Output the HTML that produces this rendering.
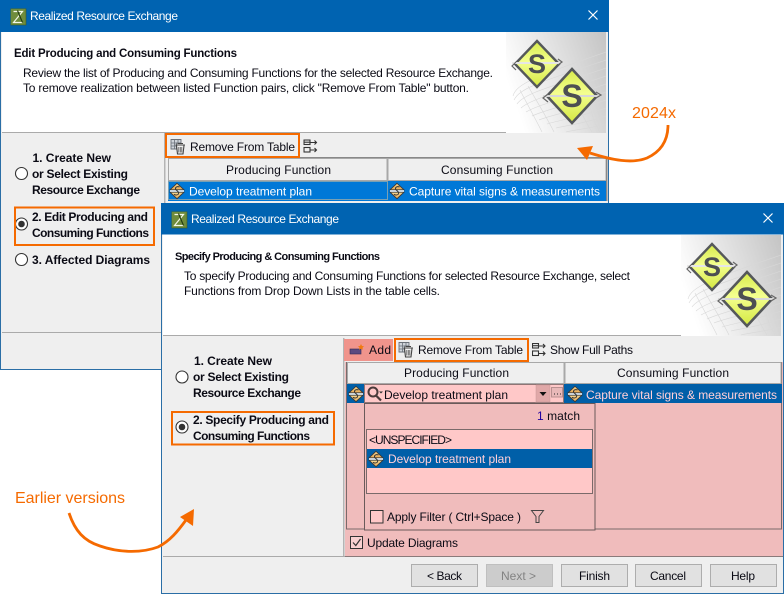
<!DOCTYPE html>
<html><head><meta charset="utf-8"><style>
html,body{margin:0;padding:0;background:#fff;width:784px;height:594px;overflow:hidden}
svg{display:block}
text{font-family:"Liberation Sans",sans-serif;font-size:12px;fill:#0a0a14;white-space:pre}
.b{font-weight:bold}
.h{font-weight:bold;font-size:11.5px}
.w{fill:#fff}
.o{font-size:16px;fill:#f56a00}
.or{fill:none;stroke:#f56a00;stroke-width:2}
.hd{fill:#efefef;stroke:#a8a8a8}
.btn{fill:#e1e1e1;stroke:#adadad}
</style></head><body>
<svg xmlns="http://www.w3.org/2000/svg" width="784" height="594" viewBox="0 0 784 594">
<defs>
<linearGradient id="bg" x1="0" y1="0.45" x2="1" y2="0.1"><stop offset="0" stop-color="#fff"/><stop offset="0.2" stop-color="#f4f4f4"/><stop offset="1" stop-color="#c6c6c6"/></linearGradient>
<linearGradient id="yl" x1="0" y1="0" x2="0" y2="1"><stop offset="0" stop-color="#d6ea48"/><stop offset="0.45" stop-color="#f4ff90"/><stop offset="1" stop-color="#d4e840"/></linearGradient>
<linearGradient id="or2" x1="0" y1="0" x2="0" y2="1"><stop offset="0" stop-color="#f8dc98"/><stop offset="1" stop-color="#e8a850"/></linearGradient>
<symbol id="banner" width="100" height="101" viewBox="0 0 100 101">
<rect width="100" height="101" fill="url(#bg)"/>
<g fill="none" stroke="#d8d8d8" stroke-width=".6">
<path d="M7 64C10 52 30 44 100 20"/><path d="M8 68C14 56 34 50 100 28"/><path d="M11 72C18 62 40 56 100 36"/><path d="M15 76C24 68 46 62 100 44"/><path d="M20 80C30 74 52 68 100 52"/><path d="M26 84C36 79 58 74 100 60"/><path d="M33 88C42 84 64 80 100 68"/><path d="M41 92C50 89 70 86 100 76"/><path d="M50 96C58 94 76 92 100 84"/><path d="M60 100C66 98 82 97 100 92"/>
<path d="M14 58C20 70 28 84 36 100"/><path d="M22 54C30 68 40 84 48 100"/><path d="M74 78C78 86 82 94 86 100"/><path d="M84 74C86 84 90 94 94 100"/>
</g>
<path d="M31 9L53 32L31 55L9 32Z" fill="url(#yl)" stroke="#55585a" stroke-width="2.4"/>
<path d="M6 31L56 31" stroke="#e6e6e6" stroke-width="2"/><path d="M52 27L56 30L52 33M10 30L6 34L10 38" fill="none" stroke="#666" stroke-width="1.2"/>
<text x="31" y="41" text-anchor="middle" style="font-size:27px;font-weight:bold;fill:#4d4f52">S</text>
<path d="M66 37L91 64L66 91L41 64Z" fill="url(#yl)" stroke="#55585a" stroke-width="2.6"/>
<path d="M37 64L95 64" stroke="#d8d8d8" stroke-width="2"/><path d="M90 60L95 63L90 66M42 62L37 66L42 70" fill="none" stroke="#666" stroke-width="1.2"/>
<text x="66" y="75" text-anchor="middle" style="font-size:32px;font-weight:bold;fill:#4d4f52">S</text>
</symbol>
<symbol id="sig" width="16" height="17" viewBox="0 0 16 17">
<path d="M8 .8L15 7.300H1Z" fill="url(#or2)" stroke="#3a3a3a" stroke-width=".9"/>
<path d="M1 9.700H15L8 16.200Z" fill="url(#or2)" stroke="#3a3a3a" stroke-width=".9"/>
<path d="M1 8.500H15" stroke="#f4f4f4" stroke-width="1.600"/>
<path d="M10.500 4.500C8 3.400 5.500 5 7 7.200C8.400 8.800 11 10 9 12C7.600 12.800 6 12.400 5 11.800" fill="none" stroke="#333" stroke-width="1"/>
</symbol>
<symbol id="rm" width="16" height="16" viewBox="0 0 16 16">
<path d="M.5 .5H10.5V4H6V10H.5Z" fill="#cfd4da" stroke="#6a7078" stroke-width=".9"/>
<path d="M4 .5V10M.5 4H6M.5 7H6M7.5 .5V4" stroke="#6a7078" stroke-width=".8" fill="none"/>
<path d="M5 6H14.500M7 4.500H12.500" stroke="#444" stroke-width="1.100"/>
<path d="M6 6.500L7 15H12.500L13.500 6.500" fill="#f0f0f0" stroke="#444" stroke-width="1.100"/>
<path d="M8.300 8V13.500M9.800 8V13.500M11.300 8V13.500" stroke="#555" stroke-width=".8"/>
</symbol>
<symbol id="paths" width="14" height="14" viewBox="0 0 14 14">
<g fill="none" stroke="#333" stroke-width="1.100"><rect x=".5" y=".5" width="6" height="4.500"/><rect x=".5" y="8" width="6" height="4.500"/><path d="M.5 2.700H6.500"/><path d="M7 3H13M11 1L13 3L11 5M7 10.500H13M11 8.500L13 10.500L11 12.500"/></g>
</symbol>
<symbol id="app" width="16" height="17" viewBox="0 0 16 17">
<rect width="15.500" height="16.500" fill="#6f8c3c" stroke="#3f5a20" stroke-width=".6"/>
<path d="M3 3H12L3 14H12" fill="none" stroke="#f4f8e8" stroke-width="1.200"/><path d="M7 2L12 14" stroke="#223a10" stroke-width="1.100"/>
</symbol>
</defs>

<!-- Window 1 -->
<rect x=".5" y=".5" width="608" height="369" fill="#efefef" stroke="#2a6ea6"/>
<rect x="0" y="0" width="609" height="32" fill="#0063b1"/>
<rect x="2" y="32" width="604" height="101" fill="#fff"/>
<rect x="2" y="132" width="504" height="1" fill="#aaa"/>
<use href="#banner" x="506" y="32"/>
<use href="#app" x="10.500" y="8.500"/>
<text x="30" y="20" class="w" textLength="148">Realized Resource Exchange</text>
<path d="M588.500 10.500L597.500 19.500M597.500 10.500L588.500 19.500" stroke="#fff" stroke-width="1.200"/>
<text x="14" y="57" class="h" textLength="223">Edit Producing and Consuming Functions</text>
<text x="23" y="77" textLength="470">Review the list of Producing and Consuming Functions for the selected Resource Exchange.</text>
<text x="23" y="92" textLength="446">To remove realization between listed Function pairs, click "Remove From Table" button.</text>
<rect x="164" y="133" width="1.500" height="70" fill="#b4b4b4"/>
<circle cx="21.500" cy="173.500" r="6" fill="#fff" stroke="#333" stroke-width="1.100"/>
<text x="32.500" y="162" class="b" textLength="78.500">1. Create New</text>
<text x="32" y="178" class="b" textLength="96">or Select Existing</text>
<text x="32" y="194" class="b" textLength="108">Resource Exchange</text>
<circle cx="21.500" cy="224" r="6" fill="#fff" stroke="#333" stroke-width="1.100"/><circle cx="21.500" cy="224" r="3.300" fill="#333"/>
<text x="32" y="221" class="b" textLength="116">2. Edit Producing and</text>
<text x="32" y="237" class="b" textLength="117">Consuming Functions</text>
<rect class="or" x="15" y="207.500" width="139" height="37.500"/>
<circle cx="21.500" cy="259.500" r="6" fill="#fff" stroke="#333" stroke-width="1.100"/>
<text x="32" y="264" class="b" textLength="118">3. Affected Diagrams</text>
<rect x="2" y="332" width="160" height="1" fill="#aaa"/>
<use href="#rm" x="170.500" y="139"/>
<text x="190" y="151" textLength="105">Remove From Table</text>
<rect class="or" x="166" y="134" width="133" height="23"/>
<use href="#paths" x="303.500" y="139.500"/>
<rect x="300" y="157" width="307" height="1" fill="#888"/>
<rect class="hd" x="168.500" y="158.500" width="218.500" height="22"/>
<rect class="hd" x="388" y="158.500" width="218" height="22"/>
<text x="226" y="174" textLength="105">Producing Function</text>
<text x="441" y="174" textLength="112">Consuming Function</text>
<rect x="168" y="181" width="439" height="20" fill="#0078d7"/>
<rect x="168.500" y="181.500" width="219" height="18" fill="none" stroke="#f0c890" stroke-dasharray="1 1"/>
<rect x="606" y="158" width="1.500" height="43" fill="#888"/>
<use href="#sig" x="169" y="182.500"/><use href="#sig" x="389" y="182.500"/>
<text x="189" y="195.500" class="w" textLength="123">Develop treatment plan</text>
<text x="409" y="195.500" class="w" textLength="191">Capture vital signs &amp; measurements</text>

<!-- Annotation 1 -->
<text x="632" y="118" class="o" textLength="44">2024x</text>

<!-- Window 2 -->
<rect x="161.500" y="203.500" width="622" height="390" fill="#efefef" stroke="#2a6ea6"/>
<rect x="161" y="203" width="623" height="31.500" fill="#0063b1"/>
<rect x="163" y="234.500" width="618" height="101" fill="#fff"/>
<rect x="163" y="335" width="518" height="1" fill="#aaa"/>
<use href="#banner" x="681" y="235"/>
<use href="#app" x="171.500" y="211.500"/>
<text x="191" y="223" class="w" textLength="148">Realized Resource Exchange</text>
<path d="M763.500 213.500L772.500 222.500M772.500 213.500L763.500 222.500" stroke="#fff" stroke-width="1.200"/>
<text x="175" y="260" class="h" textLength="205" style="font-size:11px">Specify Producing &amp; Consuming Functions</text>
<text x="184" y="280" textLength="446">To specify Producing and Consuming Functions for selected Resource Exchange, select</text>
<text x="184" y="295" textLength="256">Functions from Drop Down Lists in the table cells.</text>

<circle cx="182" cy="377" r="6" fill="#fff" stroke="#333" stroke-width="1.100"/>
<text x="194" y="365" class="b" textLength="78">1. Create New</text>
<text x="193" y="381" class="b" textLength="96">or Select Existing</text>
<text x="193" y="397" class="b" textLength="108">Resource Exchange</text>
<circle cx="182" cy="427" r="6" fill="#fff" stroke="#333" stroke-width="1.100"/><circle cx="182" cy="427" r="3.300" fill="#333"/>
<text x="193" y="424" class="b" textLength="136">2. Specify Producing and</text>
<text x="193" y="440" class="b" textLength="117">Consuming Functions</text>
<rect class="or" x="172" y="412" width="162" height="32.500"/>
<rect x="343" y="338" width="1.500" height="218" fill="#b4b4b4"/>
<rect x="163" y="556" width="620" height="1" fill="#aaa"/>

<!-- Pink panel -->
<rect x="345" y="362" width="438" height="194" fill="#f0bcbc"/>
<rect x="345" y="556" width="438" height="1" fill="#8a7a7a"/>
<rect x="344" y="339" width="49" height="22" fill="#f0948c"/>
<rect x="350" y="349" width="11" height="5" fill="#5a4a80" stroke="#332a55" stroke-width=".6"/>
<path d="M361 344l1 2 2 .3-1.500 1.500.4 2-1.900-1-1.900 1 .4-2-1.500-1.500 2-.3z" fill="#f07a10"/>
<text x="369" y="354" textLength="22">Add</text>
<use href="#rm" x="398.500" y="342"/>
<text x="418" y="354" textLength="105">Remove From Table</text>
<rect class="or" x="395" y="339" width="133" height="22"/>
<use href="#paths" x="532" y="343"/>
<text x="550" y="354" textLength="83">Show Full Paths</text>
<rect x="346.500" y="362.500" width="435" height="166.500" fill="none" stroke="#7a6a6a"/>
<rect class="hd" x="347.500" y="362.500" width="216.500" height="21"/>
<rect class="hd" x="565" y="362.500" width="216" height="21"/>
<text x="404" y="377" textLength="105">Producing Function</text>
<text x="617" y="377" textLength="112">Consuming Function</text>
<rect x="347" y="384" width="435" height="19" fill="#005fa8"/>
<use href="#sig" x="348" y="385.500"/><use href="#sig" x="567" y="385.500"/>
<rect x="364" y="384" width="200" height="19" fill="#ffc8c8"/>
<rect x="364.500" y="384.500" width="199" height="18" fill="none" stroke="#222" stroke-dasharray="1 1"/>
<circle cx="373" cy="392" r="4.500" fill="none" stroke="#4a3a3a" stroke-width="2"/><path d="M376 395.500L381 400.500" stroke="#4a3a3a" stroke-width="2.200"/><path d="M379 391.500h4l-2 2z" fill="#333"/>
<text x="384" y="399" textLength="124">Develop treatment plan</text>
<rect x="536" y="385" width="14" height="17" fill="#e0a8a8" stroke="#c89898" stroke-width=".5"/><path d="M539.500 392h7l-3.500 4z" fill="#111"/>
<rect x="551.500" y="387.500" width="11" height="9.500" fill="#e8b8b8" stroke="#b89090"/><path d="M554 394h1M557 394h1M560 394h1" stroke="#222"/>
<text x="586" y="399" textLength="191" style="fill:#ffd0d8">Capture vital signs &amp; measurements</text>
<!-- Drop panel -->
<rect x="364.500" y="403.500" width="230.500" height="126.500" fill="#f0bcbc" stroke="#6a5a5a"/>
<text x="537" y="420" textLength="43"><tspan fill="#2000a0">1</tspan> match</text>
<rect x="366.500" y="429.500" width="226" height="64" fill="#ffc8c8" stroke="#7a6a6a"/>
<text x="369" y="444" textLength="83">&lt;UNSPECIFIED&gt;</text>
<rect x="367" y="449" width="225" height="19" fill="#005fa8"/>
<use href="#sig" x="368" y="450.500"/>
<text x="388" y="463" textLength="123" style="fill:#ffd0d8">Develop treatment plan</text>
<rect x="370.500" y="510.500" width="12.500" height="12.500" fill="#ffc8c8" stroke="#333"/>
<text x="387" y="521" textLength="134">Apply Filter ( Ctrl+Space )</text>
<path d="M531.500 510.500H543.500L539 516.500V522.500H536V516.500Z" fill="none" stroke="#444" stroke-width="1"/>
<rect x="350.500" y="536.500" width="12" height="12" fill="#f8d0d0" stroke="#333"/>
<path d="M353 542.500L355.800 545.500L360.500 539" fill="none" stroke="#333" stroke-width="1.200"/>
<text x="367" y="547" textLength="91">Update Diagrams</text>

<!-- Buttons -->
<rect class="btn" x="411.500" y="564.500" width="66" height="22"/>
<rect x="486.500" y="564.500" width="66" height="22" fill="#ccc" stroke="#bfbfbf"/>
<rect class="btn" x="561.500" y="564.500" width="66" height="22"/>
<rect class="btn" x="635.500" y="564.500" width="66" height="22"/>
<rect class="btn" x="710.500" y="564.500" width="66" height="22"/>
<text x="427" y="580" textLength="35">&lt; Back</text>
<text x="501" y="580" textLength="35" style="fill:#838383">Next &gt;</text>
<text x="579" y="580" textLength="31">Finish</text>
<text x="650" y="580" textLength="36">Cancel</text>
<text x="731" y="580" textLength="24">Help</text>

<!-- Arrow 1 -->
<path d="M668 125C668 142 660 152 647 158C632 164 612 160 590 153" fill="none" stroke="#f56a00" stroke-width="2.800"/>
<path d="M577 148L593 146L587 160Z" fill="#f56a00"/>
<!-- Annotation 2 -->
<text x="15" y="503" class="o" textLength="110">Earlier versions</text>
<path d="M69 513C75 531 84 541 100 546C120 553 142 553 158 547C170 541 178 531 186 520" fill="none" stroke="#f56a00" stroke-width="2.800"/>
<path d="M194 509L180 517L193 526Z" fill="#f56a00"/>
</svg>
</body></html>
